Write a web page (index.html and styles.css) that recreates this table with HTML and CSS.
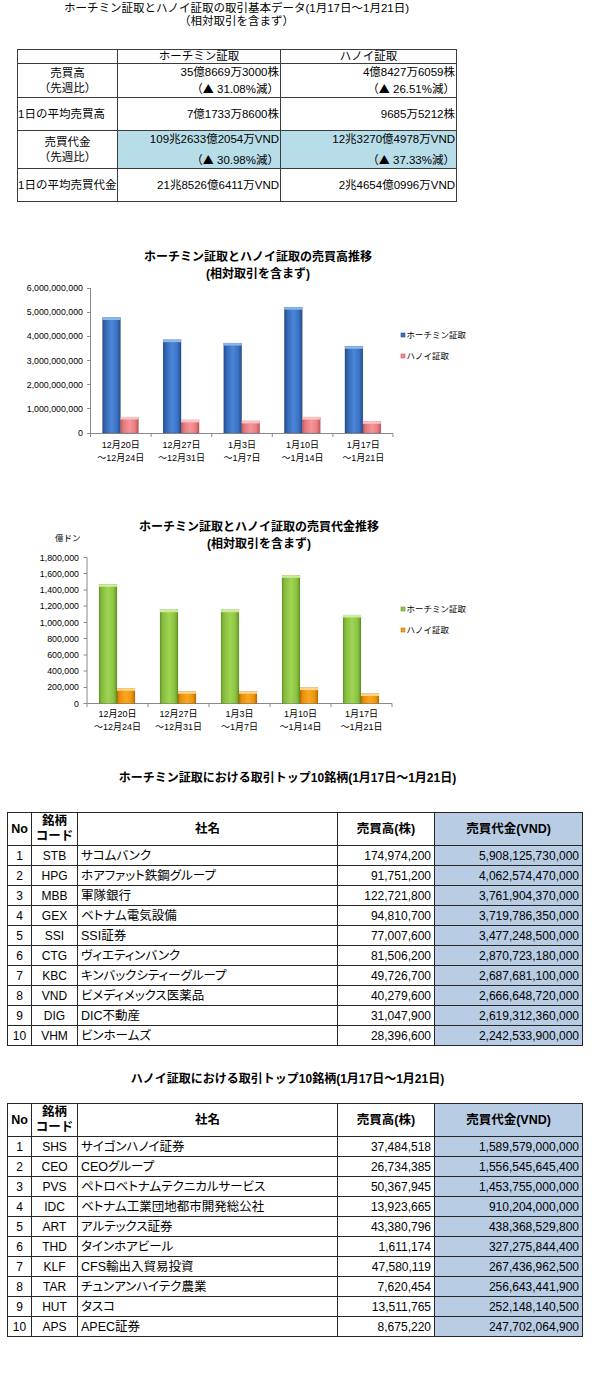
FILE: index.html
```html
<!DOCTYPE html>
<html lang="ja">
<head>
<meta charset="utf-8">
<title>取引基本データ</title>
<link rel="stylesheet" href="styles.css">
</head>
<body>
<div class="doc">
  <div class="summary-title">ホーチミン証取とハノイ証取の取引基本データ(1月17日～1月21日)<br>（相対取引を含まず）</div>

  <table class="summary">
    <colgroup><col class="c1"><col class="c2"><col class="c3"></colgroup>
    <tr class="s-head"><th></th><th>ホーチミン証取</th><th>ハノイ証取</th></tr>
    <tr class="s-r1">
      <td class="lbl">売買高<br>（先週比）</td>
      <td class="num">35億8669万3000株<br>（<span class="tri">▲</span> 31.08%減）</td>
      <td class="num">4億8427万6059株<br>（<span class="tri">▲</span> 26.51%減）</td>
    </tr>
    <tr class="s-r2">
      <td class="lbl-left">1日の平均売買高</td>
      <td class="num">7億1733万8600株</td>
      <td class="num">9685万5212株</td>
    </tr>
    <tr class="s-r3">
      <td class="lbl">売買代金<br>（先週比）</td>
      <td class="num hl"><div class="v1">109兆2633億2054万VND</div><div class="v2">（<span class="tri">▲</span> 30.98%減）</div></td>
      <td class="num hl"><div class="v1">12兆3270億4978万VND</div><div class="v2">（<span class="tri">▲</span> 37.33%減）</div></td>
    </tr>
    <tr class="s-r4">
      <td class="lbl-left">1日の平均売買代金</td>
      <td class="num">21兆8526億6411万VND</td>
      <td class="num">2兆4654億0996万VND</td>
    </tr>
  </table>

  <svg class="chart chart-vol" width="600" height="240" viewBox="0 236 600 240" xmlns="http://www.w3.org/2000/svg">
    <defs>
      <linearGradient id="gB" x1="0" x2="1" y1="0" y2="0">
        <stop offset="0" stop-color="#1f4c8c"/>
        <stop offset="0.15" stop-color="#3566b2"/>
        <stop offset="0.5" stop-color="#4a86d8"/>
        <stop offset="0.8" stop-color="#3b73c4"/>
        <stop offset="1" stop-color="#214c8a"/>
      </linearGradient>
      <linearGradient id="gP" x1="0" x2="1" y1="0" y2="0">
        <stop offset="0" stop-color="#c2565a"/>
        <stop offset="0.15" stop-color="#e2787c"/>
        <stop offset="0.5" stop-color="#f7959a"/>
        <stop offset="0.8" stop-color="#ea7f84"/>
        <stop offset="1" stop-color="#bd5257"/>
      </linearGradient>
    </defs>
    <text class="ct" x="258" y="256">ホーチミン証取とハノイ証取の売買高推移</text>
    <text class="ct" x="258" y="273">(相対取引を含まず)</text>

    <g class="ylab">
      <text x="83" y="287">6,000,000,000</text>
      <text x="83" y="311.2">5,000,000,000</text>
      <text x="83" y="335.3">4,000,000,000</text>
      <text x="83" y="359.5">3,000,000,000</text>
      <text x="83" y="383.7">2,000,000,000</text>
      <text x="83" y="407.8">1,000,000,000</text>
      <text x="83" y="432">0</text>
    </g>
    <g class="axis">
      <line x1="90.5" y1="287" x2="90.5" y2="432.5"/>
      <line x1="87" y1="287.5" x2="90.5" y2="287.5"/>
      <line x1="87" y1="311.5" x2="90.5" y2="311.5"/>
      <line x1="87" y1="335.5" x2="90.5" y2="335.5"/>
      <line x1="87" y1="359.5" x2="90.5" y2="359.5"/>
      <line x1="87" y1="383.5" x2="90.5" y2="383.5"/>
      <line x1="87" y1="407.5" x2="90.5" y2="407.5"/>
      <line x1="87" y1="432.5" x2="393" y2="432.5"/>
      <line x1="90.5" y1="432.5" x2="90.5" y2="436"/>
      <line x1="151.1" y1="432.5" x2="151.1" y2="436"/>
      <line x1="211.7" y1="432.5" x2="211.7" y2="436"/>
      <line x1="272.3" y1="432.5" x2="272.3" y2="436"/>
      <line x1="332.9" y1="432.5" x2="332.9" y2="436"/>
      <line x1="393" y1="432.5" x2="393" y2="436"/>
    </g>
    <g class="bars">
      <rect x="102.5" y="316.5" width="18" height="115.5" fill="url(#gB)"/>
      <rect x="163.1" y="338.7" width="18" height="93.3" fill="url(#gB)"/>
      <rect x="223.7" y="342.1" width="18" height="89.9" fill="url(#gB)"/>
      <rect x="284.3" y="306.2" width="18" height="125.8" fill="url(#gB)"/>
      <rect x="344.9" y="345.3" width="18" height="86.7" fill="url(#gB)"/>
      <rect class="cap-b" x="102.5" y="316.5" width="18" height="2.5"/>
      <rect class="cap-b" x="163.1" y="338.7" width="18" height="2.5"/>
      <rect class="cap-b" x="223.7" y="342.1" width="18" height="2.5"/>
      <rect class="cap-b" x="284.3" y="306.2" width="18" height="2.5"/>
      <rect class="cap-b" x="344.9" y="345.3" width="18" height="2.5"/>

      <rect x="120.5" y="416" width="18" height="16" fill="url(#gP)"/>
      <rect x="181.1" y="418.9" width="18" height="13.1" fill="url(#gP)"/>
      <rect x="241.7" y="419.9" width="18" height="12.1" fill="url(#gP)"/>
      <rect x="302.3" y="416.1" width="18" height="15.9" fill="url(#gP)"/>
      <rect x="362.9" y="420.3" width="18" height="11.7" fill="url(#gP)"/>
      <rect class="cap-p" x="120.5" y="416" width="18" height="2.5"/>
      <rect class="cap-p" x="181.1" y="418.9" width="18" height="2.5"/>
      <rect class="cap-p" x="241.7" y="419.9" width="18" height="2.5"/>
      <rect class="cap-p" x="302.3" y="416.1" width="18" height="2.5"/>
      <rect class="cap-p" x="362.9" y="420.3" width="18" height="2.5"/>
    </g>
    <g class="xlab">
      <text x="120.8" y="444">12月20日</text><text x="120.8" y="457">～12月24日</text>
      <text x="181.4" y="444">12月27日</text><text x="181.4" y="457">～12月31日</text>
      <text x="242" y="444">1月3日</text><text x="242" y="457">～1月7日</text>
      <text x="302.6" y="444">1月10日</text><text x="302.6" y="457">～1月14日</text>
      <text x="363.2" y="444">1月17日</text><text x="363.2" y="457">～1月21日</text>
    </g>
    <g class="legend">
      <rect x="401" y="332" width="4" height="4" fill="#3a6fc0" stroke="#1f4c8c" stroke-width="0.6"/>
      <text x="406.5" y="334">ホーチミン証取</text>
      <rect x="401" y="353" width="4" height="4" fill="#f08a8e" stroke="#c2565a" stroke-width="0.6"/>
      <text x="406.5" y="355">ハノイ証取</text>
    </g>
  </svg>

  <svg class="chart chart-val" width="600" height="240" viewBox="0 506 600 240" xmlns="http://www.w3.org/2000/svg">
    <defs>
      <linearGradient id="gG" x1="0" x2="1" y1="0" y2="0">
        <stop offset="0" stop-color="#6a9a28"/>
        <stop offset="0.15" stop-color="#86bb3c"/>
        <stop offset="0.5" stop-color="#9fd553"/>
        <stop offset="0.8" stop-color="#8cc443"/>
        <stop offset="1" stop-color="#679626"/>
      </linearGradient>
      <linearGradient id="gO" x1="0" x2="1" y1="0" y2="0">
        <stop offset="0" stop-color="#c47000"/>
        <stop offset="0.15" stop-color="#e98f0a"/>
        <stop offset="0.5" stop-color="#f9a821"/>
        <stop offset="0.8" stop-color="#ee9610"/>
        <stop offset="1" stop-color="#c06d00"/>
      </linearGradient>
    </defs>
    <text class="ct" x="259" y="526">ホーチミン証取とハノイ証取の売買代金推移</text>
    <text class="ct" x="259" y="543">(相対取引を含まず)</text>
    <text class="unit" x="55" y="536.5">億ドン</text>

    <g class="ylab">
      <text x="79" y="556.7">1,800,000</text>
      <text x="79" y="572.9">1,600,000</text>
      <text x="79" y="589.1">1,400,000</text>
      <text x="79" y="605.3">1,200,000</text>
      <text x="79" y="621.5">1,000,000</text>
      <text x="79" y="637.7">800,000</text>
      <text x="79" y="653.9">600,000</text>
      <text x="79" y="670.1">400,000</text>
      <text x="79" y="686.3">200,000</text>
      <text x="79" y="702.5">0</text>
    </g>
    <g class="axis">
      <line x1="87" y1="556.5" x2="87" y2="703"/>
      <line x1="83.5" y1="556.5" x2="87" y2="556.5"/>
      <line x1="83.5" y1="572.5" x2="87" y2="572.5"/>
      <line x1="83.5" y1="589" x2="87" y2="589"/>
      <line x1="83.5" y1="605" x2="87" y2="605"/>
      <line x1="83.5" y1="621.5" x2="87" y2="621.5"/>
      <line x1="83.5" y1="637.5" x2="87" y2="637.5"/>
      <line x1="83.5" y1="654" x2="87" y2="654"/>
      <line x1="83.5" y1="670" x2="87" y2="670"/>
      <line x1="83.5" y1="686.5" x2="87" y2="686.5"/>
      <line x1="83.5" y1="702.5" x2="392" y2="702.5"/>
      <line x1="87" y1="702.5" x2="87" y2="706"/>
      <line x1="148" y1="702.5" x2="148" y2="706"/>
      <line x1="209" y1="702.5" x2="209" y2="706"/>
      <line x1="270" y1="702.5" x2="270" y2="706"/>
      <line x1="331" y1="702.5" x2="331" y2="706"/>
      <line x1="392" y1="702.5" x2="392" y2="706"/>
    </g>
    <g class="bars">
      <rect x="99" y="583.3" width="18" height="119.2" fill="url(#gG)"/>
      <rect x="160" y="608.7" width="18" height="93.8" fill="url(#gG)"/>
      <rect x="221" y="608.7" width="18" height="93.8" fill="url(#gG)"/>
      <rect x="282" y="574.3" width="18" height="128.2" fill="url(#gG)"/>
      <rect x="343" y="614" width="18" height="88.5" fill="url(#gG)"/>
      <rect class="cap-g" x="99" y="583.3" width="18" height="2.5"/>
      <rect class="cap-g" x="160" y="608.7" width="18" height="2.5"/>
      <rect class="cap-g" x="221" y="608.7" width="18" height="2.5"/>
      <rect class="cap-g" x="282" y="574.3" width="18" height="2.5"/>
      <rect class="cap-g" x="343" y="614" width="18" height="2.5"/>

      <rect x="117" y="687.3" width="18" height="15.2" fill="url(#gO)"/>
      <rect x="178" y="690.3" width="18" height="12.2" fill="url(#gO)"/>
      <rect x="239" y="690.3" width="18" height="12.2" fill="url(#gO)"/>
      <rect x="300" y="686.6" width="18" height="15.9" fill="url(#gO)"/>
      <rect x="361" y="692.5" width="18" height="10" fill="url(#gO)"/>
      <rect class="cap-o" x="117" y="687.3" width="18" height="2.5"/>
      <rect class="cap-o" x="178" y="690.3" width="18" height="2.5"/>
      <rect class="cap-o" x="239" y="690.3" width="18" height="2.5"/>
      <rect class="cap-o" x="300" y="686.6" width="18" height="2.5"/>
      <rect class="cap-o" x="361" y="692.5" width="18" height="2.5"/>
    </g>
    <g class="xlab">
      <text x="117.5" y="713">12月20日</text><text x="117.5" y="726">～12月24日</text>
      <text x="178.5" y="713">12月27日</text><text x="178.5" y="726">～12月31日</text>
      <text x="239.5" y="713">1月3日</text><text x="239.5" y="726">～1月7日</text>
      <text x="300.5" y="713">1月10日</text><text x="300.5" y="726">～1月14日</text>
      <text x="361.5" y="713">1月17日</text><text x="361.5" y="726">～1月21日</text>
    </g>
    <g class="legend">
      <rect x="401" y="606" width="4" height="4" fill="#8cc443" stroke="#6a9a28" stroke-width="0.6"/>
      <text x="406.5" y="608">ホーチミン証取</text>
      <rect x="401" y="627" width="4" height="4" fill="#f5a01a" stroke="#c47000" stroke-width="0.6"/>
      <text x="406.5" y="629">ハノイ証取</text>
    </g>
  </svg>

  <div class="rank-title">ホーチミン証取における取引トップ10銘柄(1月17日～1月21日)</div>
  <table class="rank">
    <colgroup><col class="k1"><col class="k2"><col class="k3"><col class="k4"><col class="k5"></colgroup>
    <tr class="r-head"><th>No</th><th>銘柄<br>コード</th><th>社名</th><th>売買高(株)</th><th class="val">売買代金(VND)</th></tr>
    <tr><td class="c">1</td><td class="c">STB</td><td class="nm">サコムバンク</td><td class="n">174,974,200</td><td class="n val">5,908,125,730,000</td></tr>
    <tr><td class="c">2</td><td class="c">HPG</td><td class="nm">ホアファット鉄鋼グループ</td><td class="n">91,751,200</td><td class="n val">4,062,574,470,000</td></tr>
    <tr><td class="c">3</td><td class="c">MBB</td><td class="nm">軍隊銀行</td><td class="n">122,721,800</td><td class="n val">3,761,904,370,000</td></tr>
    <tr><td class="c">4</td><td class="c">GEX</td><td class="nm">ベトナム電気設備</td><td class="n">94,810,700</td><td class="n val">3,719,786,350,000</td></tr>
    <tr><td class="c">5</td><td class="c">SSI</td><td class="nm">SSI証券</td><td class="n">77,007,600</td><td class="n val">3,477,248,500,000</td></tr>
    <tr><td class="c">6</td><td class="c">CTG</td><td class="nm">ヴィエティンバンク</td><td class="n">81,506,200</td><td class="n val">2,870,723,180,000</td></tr>
    <tr><td class="c">7</td><td class="c">KBC</td><td class="nm">キンバックシティーグループ</td><td class="n">49,726,700</td><td class="n val">2,687,681,100,000</td></tr>
    <tr><td class="c">8</td><td class="c">VND</td><td class="nm">ビメディメックス医薬品</td><td class="n">40,279,600</td><td class="n val">2,666,648,720,000</td></tr>
    <tr><td class="c">9</td><td class="c">DIG</td><td class="nm">DIC不動産</td><td class="n">31,047,900</td><td class="n val">2,619,312,360,000</td></tr>
    <tr><td class="c">10</td><td class="c">VHM</td><td class="nm">ビンホームズ</td><td class="n">28,396,600</td><td class="n val">2,242,533,900,000</td></tr>
  </table>

  <div class="rank-title rank-title-2">ハノイ証取における取引トップ10銘柄(1月17日～1月21日)</div>
  <table class="rank rank-2">
    <colgroup><col class="k1"><col class="k2"><col class="k3"><col class="k4"><col class="k5"></colgroup>
    <tr class="r-head"><th>No</th><th>銘柄<br>コード</th><th>社名</th><th>売買高(株)</th><th class="val">売買代金(VND)</th></tr>
    <tr><td class="c">1</td><td class="c">SHS</td><td class="nm">サイゴンハノイ証券</td><td class="n">37,484,518</td><td class="n val">1,589,579,000,000</td></tr>
    <tr><td class="c">2</td><td class="c">CEO</td><td class="nm">CEOグループ</td><td class="n">26,734,385</td><td class="n val">1,556,545,645,400</td></tr>
    <tr><td class="c">3</td><td class="c">PVS</td><td class="nm">ペトロベトナムテクニカルサービス</td><td class="n">50,367,945</td><td class="n val">1,453,755,000,000</td></tr>
    <tr><td class="c">4</td><td class="c">IDC</td><td class="nm">ベトナム工業団地都市開発総公社</td><td class="n">13,923,665</td><td class="n val">910,204,000,000</td></tr>
    <tr><td class="c">5</td><td class="c">ART</td><td class="nm">アルテックス証券</td><td class="n">43,380,796</td><td class="n val">438,368,529,800</td></tr>
    <tr><td class="c">6</td><td class="c">THD</td><td class="nm">タインホアビール</td><td class="n">1,611,174</td><td class="n val">327,275,844,400</td></tr>
    <tr><td class="c">7</td><td class="c">KLF</td><td class="nm">CFS輸出入貿易投資</td><td class="n">47,580,119</td><td class="n val">267,436,962,500</td></tr>
    <tr><td class="c">8</td><td class="c">TAR</td><td class="nm">チュンアンハイテク農業</td><td class="n">7,620,454</td><td class="n val">256,643,441,900</td></tr>
    <tr><td class="c">9</td><td class="c">HUT</td><td class="nm">タスコ</td><td class="n">13,511,765</td><td class="n val">252,148,140,500</td></tr>
    <tr><td class="c">10</td><td class="c">APS</td><td class="nm">APEC証券</td><td class="n">8,675,220</td><td class="n val">247,702,064,900</td></tr>
  </table>
</div>
</body>
</html>
```

FILE: styles.css
```css
html, body {
  margin: 0;
  padding: 0;
  background: #ffffff;
  color: #000000;
  font-family: "Liberation Sans", "Noto Sans CJK JP", sans-serif;
}

.doc {
  width: 600px;
  padding-top: 2px;
}

.summary-title {
  width: 439px;
  margin-left: 17px;
  text-align: center;
  font-size: 11.5px;
  line-height: 12.5px;
}

/* summary table */
.summary {
  margin: 22px 0 0 17px;
  width: 439px;
  border-collapse: collapse;
  table-layout: fixed;
  font-size: 11.5px;
  line-height: 16px;
}
.summary .c1 { width: 100px; }
.summary .c2 { width: 163px; }
.summary .c3 { width: 176px; }
.summary th,
.summary td {
  border: 1px solid #3c3c3c;
  padding: 0 1px;
  white-space: nowrap;
}
.summary th {
  font-weight: normal;
  text-align: center;
  line-height: 13px;
}
.summary .s-head { height: 14px; }
.summary .s-r1 { height: 34px; }
.summary .s-r2 { height: 33px; }
.summary .s-r3 { height: 38px; }
.summary .s-r4 { height: 33px; }
.summary .lbl { text-align: center; line-height: 15px; }
.summary .lbl-left { text-align: left; padding-left: 0; }
.summary .num { text-align: right; }
.summary .hl { background: #b7dde8; }
.summary .v1 { line-height: 15px; }
.summary .v2 { line-height: 15px; margin-top: 5px; }
.summary .tri { font-family: "Noto Sans CJK JP", sans-serif; font-size: 11px; }

/* charts */
.chart {
  display: block;
  font-family: "Liberation Sans", "Noto Sans CJK JP", sans-serif;
}
.chart-vol { margin-top: 35px; }
.chart-val { margin-top: 30px; }
.chart .ct {
  font-size: 12px;
  font-weight: bold;
  text-anchor: middle;
  dominant-baseline: central;
  fill: #000;
}
.chart .unit {
  font-size: 8.5px;
  dominant-baseline: central;
  fill: #000;
}
.chart .ylab text {
  font-size: 8.8px;
  text-anchor: end;
  dominant-baseline: central;
  fill: #000;
}
.chart .xlab text {
  font-size: 9px;
  text-anchor: middle;
  dominant-baseline: central;
  fill: #000;
}
.chart .legend text {
  font-size: 8.5px;
  dominant-baseline: central;
  fill: #000;
}
.chart .axis line {
  stroke: #8a8a8a;
  stroke-width: 1;
}
.chart .bars rect {
  stroke: rgba(0, 0, 0, 0.18);
  stroke-width: 0.5;
}
.chart .bars .cap-b { fill: #8cb6ec; stroke: none; }
.chart .bars .cap-p { fill: #fbc3c6; stroke: none; }
.chart .bars .cap-g { fill: #cdee98; stroke: none; }
.chart .bars .cap-o { fill: #fdd48a; stroke: none; }

/* ranking tables */
.rank-title {
  margin-top: 23px;
  width: 575px;
  text-align: center;
  font-size: 12px;
  font-weight: bold;
  line-height: 16px;
}
.rank-title-2 { margin-top: 25px; }

.rank {
  margin: 26px 0 0 7px;
  width: 575px;
  border-collapse: collapse;
  table-layout: fixed;
  font-size: 12px;
}
.rank-2 { margin-top: 16px; }
.rank .k1 { width: 24px; }
.rank .k2 { width: 46px; }
.rank .k3 { width: 260px; }
.rank .k4 { width: 97px; }
.rank .k5 { width: 148px; }
.rank th,
.rank td {
  border: 1px solid #262626;
  padding: 0 3px;
  white-space: nowrap;
  overflow: hidden;
}
.rank th {
  font-size: 12.5px;
  font-weight: bold;
  text-align: center;
  line-height: 15px;
}
.rank .r-head { height: 33px; }
.rank tr { height: 20px; }
.rank td { line-height: 18px; }
.rank .c { text-align: center; padding: 0; }
.rank .nm {
  text-align: left;
  font-size: 12.5px;
  padding-left: 3px;
  font-feature-settings: "palt";
}
.rank .n { text-align: right; padding-right: 3px; }
.rank .val { background: #b8cce4; }
```
